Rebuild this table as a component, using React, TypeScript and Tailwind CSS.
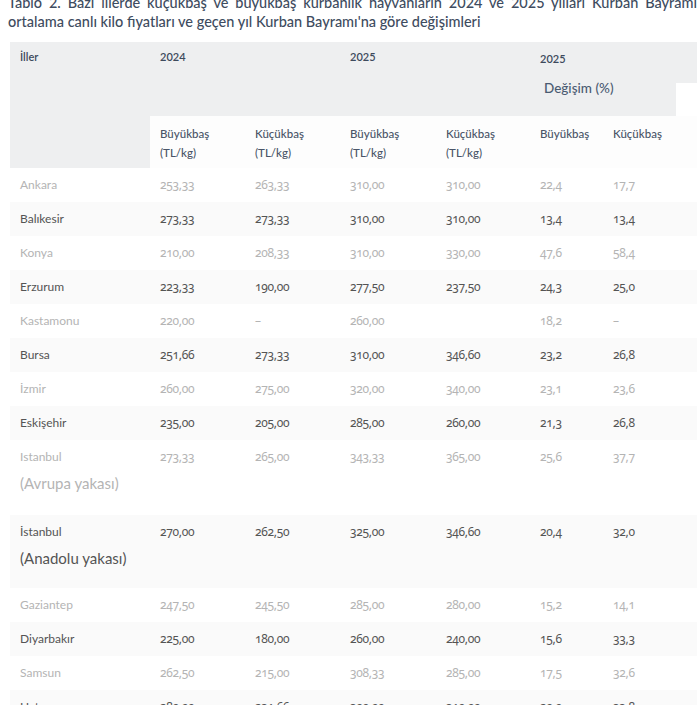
const cols = "grid grid-cols-[140px_95px_95px_96px_94px_73px_94px]";

type Row = { city: string; sub?: string; v: string[]; h?: string };

const rows: Row[] = [
  { city: "Ankara", v: ["253,33", "263,33", "310,00", "310,00", "22,4", "17,7"] },
  { city: "Balıkesir", v: ["273,33", "273,33", "310,00", "310,00", "13,4", "13,4"] },
  { city: "Konya", v: ["210,00", "208,33", "310,00", "330,00", "47,6", "58,4"] },
  { city: "Erzurum", v: ["223,33", "190,00", "277,50", "237,50", "24,3", "25,0"] },
  { city: "Kastamonu", v: ["220,00", "–", "260,00", "", "18,2", "–"] },
  { city: "Bursa", v: ["251,66", "273,33", "310,00", "346,60", "23,2", "26,8"] },
  { city: "İzmir", v: ["260,00", "275,00", "320,00", "340,00", "23,1", "23,6"] },
  { city: "Eskişehir", v: ["235,00", "205,00", "285,00", "260,00", "21,3", "26,8"] },
  { city: "Istanbul", sub: "(Avrupa yakası)", h: "h-[75px]", v: ["273,33", "265,00", "343,33", "365,00", "25,6", "37,7"] },
  { city: "İstanbul", sub: "(Anadolu yakası)", h: "h-[73px]", v: ["270,00", "262,50", "325,00", "346,60", "20,4", "32,0"] },
  { city: "Gaziantep", v: ["247,50", "245,50", "285,00", "280,00", "15,2", "14,1"] },
  { city: "Diyarbakır", v: ["225,00", "180,00", "260,00", "240,00", "15,6", "33,3"] },
  { city: "Samsun", v: ["262,50", "215,00", "308,33", "285,00", "17,5", "32,6"] },
  { city: "Hatay", v: ["280,00", "231,66", "300,00", "310,00", "20,0", "33,8"] },
];

function DataRow({ row, dark }: { row: Row; dark: boolean }) {
  const text = dark ? "text-[#545454]" : "text-[#b4b4b4]";
  return (
    <div className={`${cols} ${row.h ?? "h-[34px]"} ${dark ? "bg-[#fafafa]" : "bg-white"} ${text} text-[12px] leading-[16px]`}>
      <div className="pl-[10px] pt-[9px]">
        <div>{row.city}</div>
        {row.sub && <div className="mt-[7px] text-[15px] leading-[22px]">{row.sub}</div>}
      </div>
      {row.v.map((x, i) => (
        <div key={i} className="pl-[10px] pt-[9px] font-['Noto_Sans','Lato',sans-serif] oldstyle-nums tracking-[-0.3px]">
          {x}
        </div>
      ))}
    </div>
  );
}

export default function App() {
  return (
    <div className="w-[700px] h-[705px] overflow-hidden bg-white font-['Lato','Noto_Sans',sans-serif]">
      <div className="-mt-[7px] pl-[8px] pr-[3px] text-[14.5px] leading-[19px] font-medium text-[#3e4c60]">
        <div className="text-justify [text-align-last:justify] whitespace-nowrap">
          Tablo 2. Bazı illerde küçükbaş ve büyükbaş kurbanlık hayvanların 2024 ve 2025 yılları Kurban Bayramı
        </div>
        <div>ortalama canlı kilo fiyatları ve geçen yıl Kurban Bayramı'na göre değişimleri</div>
      </div>

      <div className="mt-[11px] ml-[10px] w-[687px]">
        {/* header */}
        <div className={`${cols} text-[11px] leading-[14px] font-semibold text-[#3d4a5c]`}>
          <div className="row-span-2 bg-[#eeeff0] pl-[10px] pt-[8px]">İller</div>
          <div className="col-span-2 h-[74px] bg-[#eeeff0] pl-[10px] pt-[8px]">2024</div>
          <div className="col-span-2 h-[74px] bg-[#eeeff0] pl-[10px] pt-[8px]">2025</div>
          <div className="col-span-2 flex h-[74px] flex-col">
            <div className="h-[41px] bg-[#eeeff0] pl-[10px] pt-[10px]">2025</div>
            <div className="h-[33px] w-[146px] bg-[#eeeff0] pl-[14px]">
              <div className="-mt-[3px] text-[13.5px] leading-[16px] font-medium text-[#4a5b72]">Değişim (%)</div>
            </div>
          </div>
          {["Büyükbaş", "Küçükbaş", "Büyükbaş", "Küçükbaş"].map((t, i) => (
            <div key={i} className="h-[52px] bg-[#fdfdfd] pl-[10px] pt-[8px] text-[11.5px] leading-[19px] font-medium text-[#4a5568]">
              <div>{t}</div>
              <div>(TL/kg)</div>
            </div>
          ))}
          {["Büyükbaş", "Küçükbaş"].map((t, i) => (
            <div key={i} className="h-[52px] bg-[#fdfdfd] pl-[10px] pt-[8px] text-[11.5px] leading-[19px] font-medium text-[#4a5568]">
              {t}
            </div>
          ))}
        </div>

        {rows.map((r, i) => (
          <DataRow key={i} row={r} dark={i % 2 === 1} />
        ))}
      </div>
    </div>
  );
}
